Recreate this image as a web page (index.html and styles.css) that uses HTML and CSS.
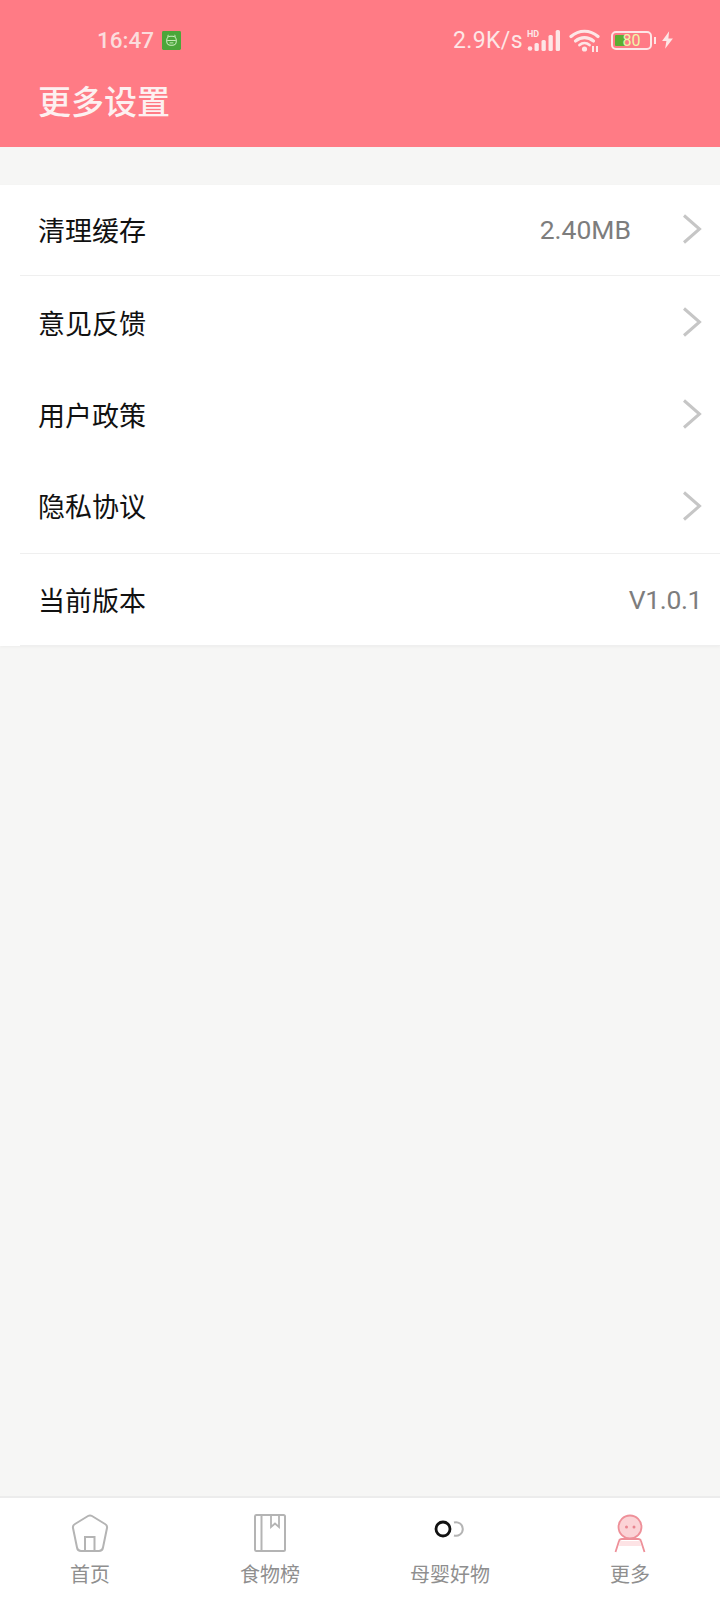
FILE: index.html
```html
<!DOCTYPE html>
<html lang="zh-CN">
<head>
    <meta charset="UTF-8">
    <meta name="viewport" content="width=device-width, initial-scale=1.0">
    <title>更多设置</title>
    <link rel="stylesheet" href="styles.css">
</head>
<body>
    <header class="top">
        <div class="status">
            <div class="status-left">
                <span class="time">16:47</span>
                <svg class="app-badge" viewBox="0 0 20 20">
                    <rect width="20" height="20" rx="1.5" fill="#4aa63a"/>
                    <path d="M6 6 L6.6 4 M14 6 L13.4 4" stroke="#cdeec0" stroke-width="1" fill="none"/>
                    <rect x="5" y="5.5" width="10" height="9.5" rx="4" fill="none" stroke="#cdeec0" stroke-width="1.1"/>
                    <path d="M5.5 10 H14.5 M8 12.5 H12" stroke="#cdeec0" stroke-width="1" fill="none"/>
                </svg>
            </div>
            <div class="status-right">
                <span class="speed">2.9K/s</span>
                <svg class="signal" viewBox="0 0 33 21">
                    <text x="0" y="7" class="hd">HD</text>
                    <circle cx="3" cy="18.500" r="2.300" fill="#fde6e6"/>
                    <rect x="7.500" y="13" width="4.300" height="8" rx="1.500" fill="#fde6e6"/>
                    <rect x="14.500" y="10" width="4.300" height="11" rx="1.500" fill="#fde6e6"/>
                    <rect x="21.500" y="5" width="4.300" height="16" rx="1.500" fill="#fde6e6"/>
                    <rect x="28.700" y="0" width="4.300" height="21" rx="1.500" fill="#fde6e6"/>
                </svg>
                <svg class="wifi" viewBox="0 0 31 23">
                    <path d="M2 7.500 C10 0.500 21 0.500 29 7.500" fill="none" stroke="#fde6e6" stroke-width="3.200" stroke-linecap="round"/>
                    <path d="M6.500 12 C12 7.500 19 7.500 24.500 12" fill="none" stroke="#fde6e6" stroke-width="3.200" stroke-linecap="round"/>
                    <path d="M10.500 16 C13.500 13.500 17.500 13.500 20.500 16" fill="none" stroke="#fde6e6" stroke-width="2.800" stroke-linecap="round"/>
                    <circle cx="15.500" cy="20" r="2.600" fill="#fde6e6"/>
                    <path d="M24 17 V23 M28 17 V23" stroke="#fde6e6" stroke-width="2"/>
                </svg>
                <div class="battery">
                    <div class="battery-body">
                        <div class="battery-fill"></div>
                        <span class="battery-num">80</span>
                    </div>
                    <div class="battery-tip"></div>
                </div>
                <svg class="bolt" viewBox="0 0 12 16">
                    <path d="M7.500 0 L1 9 H5 L3.800 16 L11 6.500 H6.800 Z" fill="#fde6e6"/>
                </svg>
            </div>
        </div>
        <h1 class="title">更多设置</h1>
    </header>

    <main class="content">
        <div class="list">
            <div class="row row-line row-first">
                <span class="label">清理缓存</span>
                <span class="value value-cache">2.40MB</span>
                <svg class="chevron" viewBox="0 0 20 30"><path d="M2 1.500 L17.500 15 L2 28.500" fill="none" stroke="#c6c6c6" stroke-width="3"/></svg>
            </div>
            <div class="row">
                <span class="label">意见反馈</span>
                <svg class="chevron" viewBox="0 0 20 30"><path d="M2 1.500 L17.500 15 L2 28.500" fill="none" stroke="#c6c6c6" stroke-width="3"/></svg>
            </div>
            <div class="row">
                <span class="label">用户政策</span>
                <svg class="chevron" viewBox="0 0 20 30"><path d="M2 1.500 L17.500 15 L2 28.500" fill="none" stroke="#c6c6c6" stroke-width="3"/></svg>
            </div>
            <div class="row row-line row-privacy">
                <span class="label">隐私协议</span>
                <svg class="chevron" viewBox="0 0 20 30"><path d="M2 1.500 L17.500 15 L2 28.500" fill="none" stroke="#c6c6c6" stroke-width="3"/></svg>
            </div>
            <div class="row row-line">
                <span class="label">当前版本</span>
                <span class="value value-version">V1.0.1</span>
            </div>
        </div>
    </main>

    <nav class="tabs">
        <div class="tab">
            <svg class="tab-icon" viewBox="0 0 40 40">
                <path d="M5 11 L18 3 Q20 1.800 22 3 L35 11 Q37.500 12.500 37 15 L33 34.500 Q32.400 38 29 38 H11 Q7.600 38 7 34.500 L3 15 Q2.500 12.500 5 11 Z" fill="none" stroke="#b4b4b4" stroke-width="2"/>
                <path d="M15 38 V24 H24.500 V38" fill="none" stroke="#b4b4b4" stroke-width="2"/>
            </svg>
            <span class="tab-text">首页</span>
        </div>
        <div class="tab">
            <svg class="tab-icon" viewBox="0 0 40 40">
                <rect x="5" y="2" width="30" height="36" rx="1.500" fill="none" stroke="#b4b4b4" stroke-width="2"/>
                <path d="M11.500 2 V38" fill="none" stroke="#b4b4b4" stroke-width="2"/>
                <path d="M21 2 V14 L25 10.500 L29 14 V2" fill="none" stroke="#b4b4b4" stroke-width="1.800"/>
            </svg>
            <span class="tab-text">食物榜</span>
        </div>
        <div class="tab">
            <svg class="tab-icon" viewBox="0 0 40 40">
                <circle cx="13" cy="16" r="7" fill="none" stroke="#111" stroke-width="2.800"/>
                <path d="M24 9.500 A6.800 6.800 0 1 1 24 22.500" fill="none" stroke="#b4b4b4" stroke-width="2"/>
            </svg>
            <span class="tab-text">母婴好物</span>
        </div>
        <div class="tab">
            <svg class="tab-icon" viewBox="0 0 40 40">
                <circle cx="20" cy="14" r="11.500" fill="#fbd3d6" stroke="#ee9099" stroke-width="1.800"/>
                <circle cx="16.500" cy="14" r="1.500" fill="#e98590"/>
                <circle cx="24" cy="14" r="1.500" fill="#e98590"/>
                <path d="M10 28 H30 L31 33 H9 Z" fill="#fde3e5"/>
                <path d="M5.500 39 L9 28 Q9.500 26 12 26 H28 Q30.500 26 31 28 L34.500 39" fill="none" stroke="#ee9099" stroke-width="1.800"/>
            </svg>
            <span class="tab-text">更多</span>
        </div>
    </nav>
</body>
</html>
```

FILE: styles.css
```css
* {
    box-sizing: border-box;
}
html, body {
    height: 100%;
}
body {
    margin: 0;
    display: flex;
    flex-direction: column;
    background: #f6f6f5;
    font-family: "Noto Sans CJK SC", "Liberation Sans", sans-serif;
}
.top {
    height: 147px;
    background: #ff7b85;
    color: #fdf0f0;
    padding-top: 25px;
}
.status {
    display: flex;
    justify-content: space-between;
    align-items: center;
    height: 30px;
    padding-left: 97px;
    padding-right: 46px;
}
.status-left, .status-right {
    display: flex;
    align-items: center;
}
.time {
    font-family: Roboto, sans-serif;
    font-size: 22.5px;
    font-weight: 500;
    color: #fbdcdc;
}
.app-badge {
    width: 19px;
    height: 19px;
    margin-left: 8px;
}
.speed {
    font-family: Roboto, sans-serif;
    font-size: 23px;
    letter-spacing: 0.4px;
    color: #fde6e6;
}
.signal {
    width: 33px;
    height: 21px;
    margin-left: 4px;
}
.hd {
    font-family: Roboto, sans-serif;
    font-size: 9px;
    font-weight: 700;
    fill: #fde6e6;
}
.wifi {
    width: 31px;
    height: 23px;
    margin-left: 9px;
}
.battery {
    display: flex;
    align-items: center;
    margin-left: 11px;
}
.battery-body {
    position: relative;
    width: 41px;
    height: 19px;
    border: 2px solid #fde6e6;
    border-radius: 5px;
    padding: 2px;
}
.battery-fill {
    width: 10px;
    height: 100%;
    background: #5cae32;
    border-radius: 1px;
}
.battery-num {
    position: absolute;
    inset: 0;
    text-align: center;
    font-family: Roboto, sans-serif;
    font-size: 16px;
    line-height: 15px;
    color: #eef7a8;
}
.battery-tip {
    width: 2px;
    height: 7px;
    margin-left: 2px;
    background: #fde6e6;
}
.bolt {
    width: 13px;
    height: 18px;
    margin-left: 5px;
}
.title {
    margin: 22px 0 0 38px;
    font-size: 33px;
    line-height: 46px;
    font-weight: 500;
    color: #fdf0f0;
}
.content {
    flex: 1;
    padding-top: 38px;
}
.list {
    background: #fff;
    box-shadow: 0 1px 3px rgba(0,0,0,0.04);
}
.row {
    display: flex;
    align-items: center;
    height: 92px;
    margin-left: 20px;
    padding-left: 18px;
    padding-right: 18px;
}
.row-first {
    height: 91px;
    padding-bottom: 2px;
}
.row-privacy {
    height: 94px;
    padding-bottom: 2px;
}
.row-line {
    border-bottom: 1px solid #efefef;
}
.label {
    flex: 1;
    font-size: 27px;
    color: #111;
}
.value {
    font-family: Roboto, sans-serif;
    font-size: 26.5px;
    color: #7d7d7d;
}
.value-cache {
    margin-right: 51px;
}
.value-version {
    letter-spacing: -0.4px;
}
.chevron {
    width: 20px;
    height: 30px;
}
.tabs {
    display: flex;
    height: 104px;
    background: #fff;
    border-top: 2px solid #ececec;
}
.tab {
    flex: 1;
    display: flex;
    flex-direction: column;
    align-items: center;
    padding-top: 15px;
}
.tab-icon {
    width: 40px;
    height: 40px;
}
.tab-text {
    margin-top: 6px;
    font-size: 20px;
    line-height: 30px;
    color: #8f8f8f;
}
```
